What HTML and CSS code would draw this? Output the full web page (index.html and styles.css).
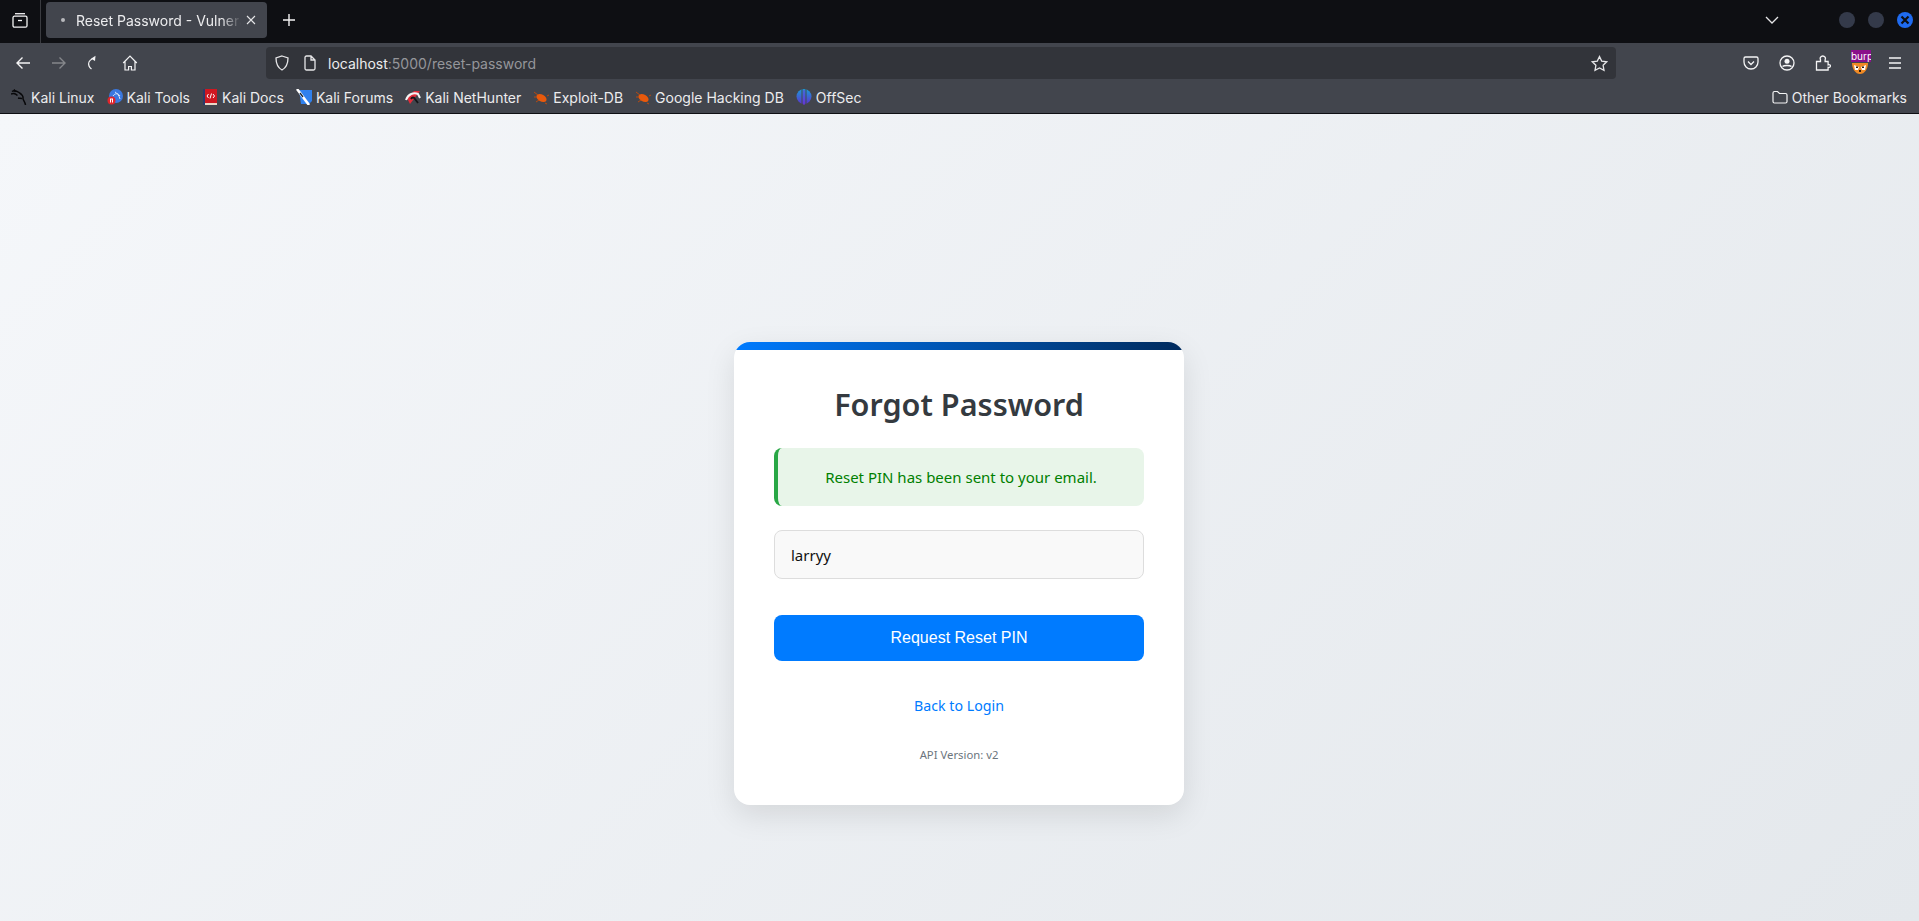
FILE: index.html
```html
<!DOCTYPE html>
<html lang="en">
<head>
    <meta charset="UTF-8">
    <title>Reset Password - Vulnerable App</title>
    <link rel="stylesheet" href="styles.css">
</head>
<body>
    <!-- Tab strip -->
    <div class="tabbar">
        <div class="tab-menu">
            <svg width="16" height="16" viewBox="0 0 16 16" fill="none" stroke="#f4f4f5" stroke-width="1.3"><path d="M3 1.700h10"/><rect x="1" y="4.200" width="14" height="11" rx="1.500"/><path d="M6 8.500h4"/></svg>
        </div>
        <div class="tab">
            <span class="tab-dot"></span>
            <span class="tab-title">Reset Password - Vulnerable App</span>
            <svg class="tab-close" width="12" height="12" viewBox="0 0 12 12" stroke="#e6e6e8" stroke-width="1.100"><path d="M2 2l8 8M10 2l-8 8"/></svg>
        </div>
        <svg class="tab-new" width="16" height="16" viewBox="0 0 16 16" stroke="#f4f4f5" stroke-width="1.400"><path d="M8 2v12M2 8h12"/></svg>
        <div class="tabbar-right">
            <svg class="tab-list" width="16" height="10" viewBox="0 0 16 10" fill="none" stroke="#e6e6e8" stroke-width="1.300"><path d="M2 2l6 6 6-6"/></svg>
            <span class="win-btn"></span>
            <span class="win-btn"></span>
            <span class="win-btn win-close">
                <svg width="10" height="10" viewBox="0 0 10 10" stroke="#0e0f13" stroke-width="2.200"><path d="M1.500 1.500l7 7M8.500 1.500l-7 7"/></svg>
            </span>
        </div>
    </div>

    <!-- Navigation toolbar -->
    <div class="toolbar">
        <div class="nav-buttons">
            <svg width="16" height="16" viewBox="0 0 16 16" fill="none" stroke="#f4f4f5" stroke-width="1.400"><path d="M15 8H2M7.500 2.500L2 8l5.500 5.500"/></svg>
            <svg class="nav-off" width="16" height="16" viewBox="0 0 16 16" fill="none" stroke="#85878b" stroke-width="1.400"><path d="M1 8h13M8.500 2.500L14 8l-5.500 5.500"/></svg>
            <svg class="nav-reload" width="10" height="16" viewBox="0 0 10 16" fill="none" stroke="#f4f4f5" stroke-width="1.300"><path d="M5 4C2.200 5.500 1 8.500 2 11c.5 1.300 1.300 2.200 2.500 3"/><path d="M4 3.800L8.500 .8 8 6z" fill="#f4f4f5" stroke="none"/></svg>
            <svg class="nav-home" width="16" height="16" viewBox="0 0 16 16" fill="none" stroke="#f4f4f5" stroke-width="1.200"><path d="M1.200 8L8 1.200 14.800 8M3 6.500V15h3.600v-3.500h2.800V15H13V6.500"/></svg>
        </div>
        <div class="urlbar">
            <svg width="16" height="16" viewBox="0 0 16 16" fill="none" stroke="#e6e6e8" stroke-width="1.300"><path d="M8 1l6 2c0 5.500-1.500 9.500-6 12C3.500 12.500 2 8.500 2 3z"/></svg>
            <svg class="url-page" width="14" height="16" viewBox="0 0 14 16" fill="none" stroke="#e6e6e8" stroke-width="1.300"><path d="M2 2.500A1.500 1.500 0 0 1 3.500 1H8l4 4v8.500a1.500 1.500 0 0 1-1.500 1.500h-7A1.500 1.500 0 0 1 2 13.500zM8 1v4h4"/></svg>
            <span class="url-text">localhost<span class="url-rest">:5000/reset-password</span></span>
            <svg class="url-star" width="17" height="17" viewBox="0 0 17 17" fill="none" stroke="#e6e6e8" stroke-width="1.300"><path d="M8.500 1.500l2.200 4.600 5 .7-3.600 3.500.9 5-4.500-2.400L4 15.300l.9-5L1.300 6.800l5-.7z"/></svg>
        </div>
        <div class="toolbar-icons">
            <svg width="16" height="16" viewBox="0 0 16 16" fill="none" stroke="#f4f4f5" stroke-width="1.300"><path d="M2.500 2h11A1.500 1.500 0 0 1 15 3.500V7a7 7 0 0 1-14 0V3.500A1.500 1.500 0 0 1 2.500 2z"/><path d="M5 6.500L8 9.500l3-3"/></svg>
            <svg width="16" height="16" viewBox="0 0 16 16" fill="none" stroke="#f4f4f5" stroke-width="1.300"><circle cx="8" cy="8" r="7"/><circle cx="8" cy="6.300" r="2.500" fill="#f4f4f5" stroke="none"/><path d="M3.500 11.500c1.500-1.300 7.500-1.300 9 0" stroke-width="1.600"/></svg>
            <svg width="16" height="16" viewBox="0 0 16 16" fill="none" stroke="#f4f4f5" stroke-width="1.300"><path d="M1.500 6.500h4V4.800C4.500 3 6 1 7.800 1s3.300 2 2.300 3.800v1.700h3v3.300c1.700-.6 2.700.4 2.200 1.700-.4 1-1.300 1.100-2.200.8V15h-11.600z"/></svg>
            <span class="burp">
                <span class="burp-badge">burp</span>
                <svg class="burp-face" width="16" height="11" viewBox="0 0 16 11"><path d="M0 0h16c0 6-3.500 11-8 11S0 6 0 0z" fill="#f08a24"/><path d="M2 2l5 2-1 3H3zM14 2l-5 2 1 3h3z" fill="#fff"/><path d="M4 3.500h2v1.500H4zM10 3.500h2v1.500h-2zM7 7h2v2H7z" fill="#2a1a10"/></svg>
            </span>
            <svg width="16" height="14" viewBox="0 0 16 14" stroke="#f4f4f5" stroke-width="1.300"><path d="M2 2h12M2 7h12M2 12h12"/></svg>
        </div>
    </div>

    <!-- Bookmarks -->
    <div class="bookmarks">
        <a class="bookmark">
            <svg width="16" height="17" viewBox="0 0 16 17" fill="none" stroke="#08080a" stroke-width="1.500"><path d="M1 2.500C3 1 6 2 8 3.500c2.500 1.800 4.500 3 4 5.500-.4 2 2 3.500 2.500 7"/><path d="M0 5c2.500-1 5 0 6.500 1.500M3 .5L4.500 3M7 9c1.500.3 3 .2 4 .5"/></svg>
            Kali Linux
        </a>
        <a class="bookmark">
            <svg width="16" height="16" viewBox="0 0 16 16"><circle cx="9" cy="7" r="7" fill="#3a78e0"/><path d="M6 7c2-3 5-3 7 0M8 3c2 1 4 3 5 7" fill="none" stroke="#d8e6fb" stroke-width="1"/><circle cx="4.500" cy="11.500" r="4" fill="#e0252c"/><path d="M3 10h3M3.500 10v3.500M5.500 10v3.500" stroke="#fff" stroke-width="1"/></svg>
            Kali Tools
        </a>
        <a class="bookmark">
            <svg width="16" height="16" viewBox="0 0 16 16"><rect x="1" y="0" width="2" height="16" fill="#2b3a6b"/><rect x="3" y="0" width="12" height="14" fill="#cf1720"/><rect x="3" y="14" width="12" height="2" fill="#e8d8c8"/><path d="M6.500 5L5 7l1.500 2M11 5l1.500 2L11 9M9.500 4.500L8 9.500" fill="none" stroke="#fff" stroke-width="1"/></svg>
            Kali Docs
        </a>
        <a class="bookmark">
            <svg width="16" height="16" viewBox="0 0 16 16"><path d="M3 1h13v11l-3 3H5z" fill="#2f80ed"/><path d="M1 0l12 16" fill="none" stroke="#fff" stroke-width="2.600"/><path d="M4 4l3 4" stroke="#16202c" stroke-width="1.300"/></svg>
            Kali Forums
        </a>
        <a class="bookmark">
            <svg width="16" height="16" viewBox="0 0 16 16"><path d="M2 9L9 2h6L5 15z" fill="#e22c3a"/><path d="M1 11C3 5 9 3 13 5l2 4" fill="none" stroke="#f3f3f3" stroke-width="2"/><path d="M6 10c1-2 3-2 4 0l3 4" fill="none" stroke="#151518" stroke-width="1.800"/></svg>
            Kali NetHunter
        </a>
        <a class="bookmark">
            <svg width="16" height="16" viewBox="0 0 16 16"><ellipse cx="8.500" cy="9" rx="5.500" ry="3.500" transform="rotate(30 8.500 9)" fill="#e8590c"/><path d="M1 3l4 3M1 8l3 0M3 13l3-2M12 14l2 1M14 7l2-1" stroke="#b94a10" stroke-width="1"/></svg>
            Exploit-DB
        </a>
        <a class="bookmark">
            <svg width="16" height="16" viewBox="0 0 16 16"><ellipse cx="8.500" cy="9" rx="5.500" ry="3.500" transform="rotate(30 8.500 9)" fill="#e8590c"/><path d="M1 3l4 3M1 8l3 0M3 13l3-2M12 14l2 1M14 7l2-1" stroke="#b94a10" stroke-width="1"/></svg>
            Google Hacking DB
        </a>
        <a class="bookmark">
            <svg width="16" height="16" viewBox="0 0 16 16"><defs><linearGradient id="offsecFill" x1="0" y1="0" x2="0" y2="1"><stop offset="0" stop-color="#1a9bd7"/><stop offset="1" stop-color="#5b34d0"/></linearGradient></defs><circle cx="8" cy="7.500" r="7.500" fill="url(#offsecFill)"/><path d="M6 0v15M10 0v15" stroke="#44474f" stroke-width="1"/><path d="M8 1v15" stroke="#6a3ce0" stroke-width="1"/></svg>
            OffSec
        </a>
        <a class="bookmark bookmark-other">
            <svg width="16" height="14" viewBox="0 0 16 14" fill="none" stroke="#f4f4f5" stroke-width="1.200"><path d="M1 3a1.500 1.500 0 0 1 1.500-1.500h3L7.500 3.500h6A1.500 1.500 0 0 1 15 5v6.500a1.500 1.500 0 0 1-1.500 1.500h-11A1.500 1.500 0 0 1 1 11.500z"/></svg>
            Other Bookmarks
        </a>
    </div>

    <!-- Page content -->
    <main class="page">
        <div class="card">
            <h1>Forgot Password</h1>
            <div class="alert">Reset PIN has been sent to your email.</div>
            <form class="reset-form">
                <input class="field" type="text" value="larryy">
                <button class="submit-btn" type="button">Request Reset PIN</button>
            </form>
            <a class="back-link" href="#">Back to Login</a>
            <p class="api-version">API Version: v2</p>
        </div>
    </main>
</body>
</html>
```

FILE: styles.css
```css
* {
    box-sizing: border-box;
}

html, body {
    height: 100%;
}

body {
    margin: 0;
    display: flex;
    flex-direction: column;
    font-family: Inter, "Liberation Sans", sans-serif;
    overflow: hidden;
}

svg {
    display: block;
    flex-shrink: 0;
}

/* Browser tab strip */
.tabbar {
    display: flex;
    align-items: center;
    height: 43px;
    background-color: #0e0f13;
}

.tab-menu {
    display: flex;
    align-items: center;
    justify-content: center;
    width: 41px;
    height: 43px;
    padding-bottom: 3px;
    border-right: 1px solid #3a3b40;
}

.tab {
    display: flex;
    align-items: center;
    width: 221px;
    height: 36px;
    margin: 2px 0 5px 5px;
    padding-left: 15px;
    background-color: #42454d;
    border-radius: 4px;
    color: #ececee;
    font-size: 14px;
}

.tab-dot {
    width: 4px;
    height: 4px;
    margin-right: 11px;
    background-color: #b8b9bc;
    border-radius: 50%;
    flex-shrink: 0;
}

.tab-title {
    width: 165px;
    overflow: hidden;
    white-space: nowrap;
    -webkit-mask-image: linear-gradient(to right, #000 88%, transparent);
    mask-image: linear-gradient(to right, #000 88%, transparent);
}

.tab-close {
    margin-left: 4px;
}

.tab-new {
    margin: 0 0 3px 14px;
}

.tabbar-right {
    display: flex;
    align-items: center;
    margin-left: auto;
    padding: 0 6px 3px 0;
}

.tab-list {
    margin-right: 46px;
}

.win-btn {
    display: flex;
    align-items: center;
    justify-content: center;
    width: 16px;
    height: 16px;
    margin-left: 13px;
    background-color: #343a4a;
    border-radius: 50%;
}

.win-close {
    background-color: #1f6bf0;
}

/* Navigation toolbar */
.toolbar {
    display: flex;
    align-items: center;
    height: 36px;
    padding-top: 4px;
    background-color: #42454d;
}

.nav-buttons {
    display: flex;
    align-items: center;
    width: 266px;
    padding-left: 15px;
}

.nav-off {
    margin-left: 20px;
}

.nav-reload {
    margin-left: 20px;
}

.nav-home {
    margin-left: 25px;
}

.urlbar {
    display: flex;
    align-items: center;
    width: 1350px;
    height: 32px;
    padding: 0 8px;
    background-color: #32343a;
    border-radius: 4px;
}

.url-page {
    margin-left: 13px;
}

.url-text {
    margin-left: 11px;
    color: #ececee;
    font-size: 14px;
}

.url-rest {
    color: #95969a;
}

.url-star {
    margin-left: auto;
}

.toolbar-icons {
    display: flex;
    align-items: center;
    gap: 20px;
    flex: 1;
    padding-left: 127px;
}

.burp {
    position: relative;
    display: block;
    width: 20px;
    height: 22px;
    margin-right: -4px;
}

.burp-badge {
    position: absolute;
    top: -2px;
    left: 0;
    width: 20px;
    height: 12px;
    overflow: hidden;
    background-color: #8a0f8a;
    color: #fff;
    font-size: 10px;
    line-height: 12px;
    white-space: nowrap;
    z-index: 1;
}

.burp-face {
    position: absolute;
    bottom: 0;
    left: 1px;
}

/* Bookmarks bar */
.bookmarks {
    display: flex;
    align-items: center;
    gap: 12px;
    height: 35px;
    padding: 2px 12px 0 11px;
    background-color: #42454d;
    border-bottom: 1px solid #0e0f13;
}

.bookmark {
    display: flex;
    align-items: center;
    gap: 4px;
    color: #ececee;
    font-size: 14px;
    white-space: nowrap;
}

.bookmark-other {
    margin-left: auto;
}

/* Page */
.page {
    flex: 1;
    display: flex;
    justify-content: center;
    padding: 228px 1px 0 0;
    background: linear-gradient(135deg, #f5f7fa 0%, #e4e8ec 100%);
}

.card {
    position: relative;
    width: 450px;
    height: 463px;
    padding: 40px;
    overflow: hidden;
    background-color: #ffffff;
    border-radius: 16px;
    box-shadow: 0 10px 30px rgba(0, 0, 0, 0.1);
    font-family: "Noto Sans", sans-serif;
    text-align: center;
}

.card::before {
    content: "";
    position: absolute;
    top: 0;
    left: 0;
    width: 100%;
    height: 8px;
    background: linear-gradient(90deg, #007bff, #002a5c);
}

h1 {
    margin: 1px 0 23px;
    color: #343a40;
    font-size: 30.6px;
    font-weight: 600;
    line-height: 42px;
}

.alert {
    display: flex;
    align-items: center;
    justify-content: center;
    height: 58px;
    margin-bottom: 24px;
    background-color: #e8f5e9;
    border-left: 4px solid #28a745;
    border-radius: 8px;
    color: #008000;
    font-size: 15px;
}

.reset-form {
    display: flex;
    flex-direction: column;
    gap: 36px;
}

.field {
    width: 100%;
    height: 49px;
    padding: 0 16px;
    background-color: #f9f9f9;
    border: 1px solid #ddd;
    border-radius: 8px;
    color: #111;
    font-family: "Noto Sans", sans-serif;
    font-size: 15px;
}

.submit-btn {
    height: 46px;
    background-color: #007bff;
    border: none;
    border-radius: 8px;
    color: white;
    font-family: "Liberation Sans", Arial, sans-serif;
    font-size: 16px;
}

.back-link {
    display: block;
    margin-top: 34px;
    color: #007bff;
    font-size: 14.2px;
    line-height: 22px;
    text-decoration: none;
}

.api-version {
    margin: 30px 0 0;
    color: #6c757d;
    font-size: 11.3px;
    line-height: 16px;
}
```
